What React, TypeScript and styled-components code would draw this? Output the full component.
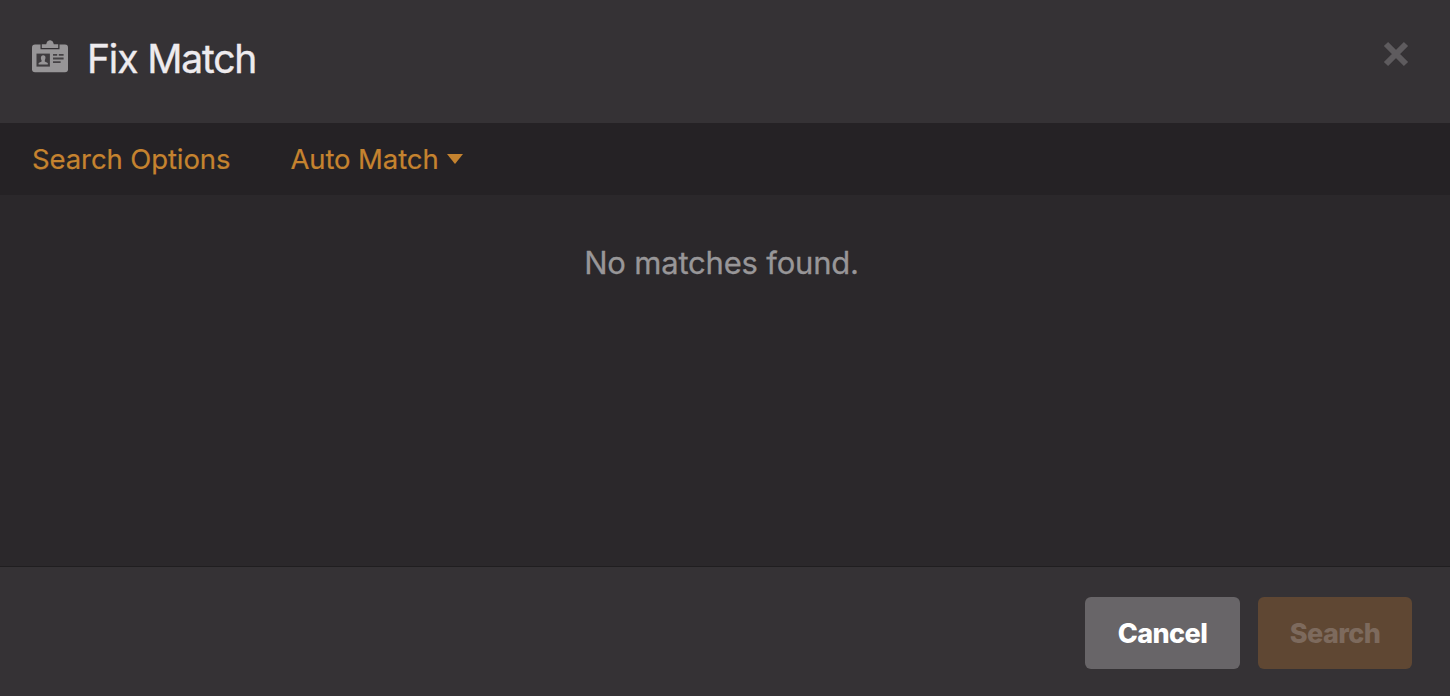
import React, { FC } from "react";
import styled, { createGlobalStyle } from "styled-components";

const GlobalStyle = createGlobalStyle`
  body {
    margin: 0;
    background-color: #2b282b;
    font-family: Inter, "Liberation Sans", sans-serif;
  }
`;
const Modal = styled.div`
  display: flex;
  flex-direction: column;
  height: 100vh;
  overflow: hidden;
  background-color: #2b282b;
`;
const Header = styled.header`
  box-sizing: border-box;
  display: flex;
  flex: none;
  height: 123px;
  padding: 35px 41px 0 32px;
  background-color: #353235;
`;
const TitleIcon = styled.svg`
  flex: none;
  width: 36px;
  height: 34px;
  margin-top: 4px;
`;
const Title = styled.h1`
  flex: 1;
  margin: 0 0 0 19px;
  font-size: 39px;
  font-weight: 400;
  line-height: 48px;
  letter-spacing: -1.15px;
  -webkit-text-stroke: 0.4px currentColor;
  color: #eeebee;
`;
const CloseButton = styled.button`
  width: 26px;
  height: 26px;
  margin-top: 6px;
  padding: 0;
  border: 0;
  background: none;
  color: #5e5b5e;

  svg {
    display: block;
  }
`;
const Toolbar = styled.nav`
  display: flex;
  flex: none;
  align-items: center;
  gap: 60px;
  height: 72px;
  padding: 0 32px;
  background-color: #252225;
`;
const ToolbarLink = styled.button`
  display: flex;
  align-items: center;
  gap: 8px;
  padding: 0;
  border: 0;
  background: none;
  font-family: inherit;
  font-size: 27.5px;
  font-weight: 400;
  line-height: 36px;
  letter-spacing: -0.1px;
  -webkit-text-stroke: 0.2px currentColor;
  white-space: nowrap;
  color: #c5832f;
`;
const Caret = styled.span`
  border-top: 10px solid currentColor;
  border-left: 8px solid transparent;
  border-right: 8px solid transparent;
`;
const Content = styled.main`
  flex: 1;
  padding: 48px 7px 0 0;
`;
const EmptyMessage = styled.p`
  margin: 0;
  text-align: center;
  font-size: 31px;
  font-weight: 400;
  line-height: 40px;
  letter-spacing: -0.2px;
  -webkit-text-stroke: 0.3px currentColor;
  color: #989698;
`;
const Footer = styled.footer`
  box-sizing: border-box;
  display: flex;
  flex: none;
  justify-content: flex-end;
  gap: 18px;
  height: 130px;
  padding: 30px 38px 0;
  border-top: 1px solid #201e20;
  background-color: #353235;
`;
const FooterButton = styled.button<{ $primary?: boolean }>`
  width: ${(props) => (props.$primary ? 154 : 155)}px;
  height: 72px;
  padding: 0;
  border: 0;
  border-radius: 6px;
  background-color: ${(props) => (props.$primary ? "#5f4733" : "#686568")};
  font-family: inherit;
  font-size: 27px;
  font-weight: 800;
  letter-spacing: -0.6px;
  color: ${(props) => (props.$primary ? "#7d6a5d" : "#ffffff")};
`;

const ClipboardIcon: FC = () => (
  <TitleIcon viewBox="0 0 36 34">
    <rect y="5.5" width="36" height="27.8" rx="3" fill="#979597" />
    <path
      d="M9.8 5.2H14.2C14.8 2.6 16 1.4 18 1.4S21.2 2.6 21.8 5.2H26.2V9H9.8Z"
      fill="#979597"
      stroke="#353235"
      strokeWidth="2.6"
      paintOrder="stroke"
    />
    <circle cx="18" cy="4.4" r="3" fill="#979597" />
    <rect x="4.5" y="14.6" width="13.4" height="13" fill="#3f3c3f" />
    <ellipse cx="11.2" cy="18.9" rx="2.3" ry="2.6" fill="#979597" />
    <path d="M6.6 25.6V24L9.6 22.5V20.5H12.8V22.5L15.8 24V25.6Z" fill="#979597" />
    <path
      d="M21 15.8H25.2M26.8 15.8H31.6M21 19.5H31.6M21 23.2H28.6"
      stroke="#454245"
      strokeWidth="1.8"
    />
  </TitleIcon>
);

const App: FC = () => {
  return (
    <>
      <GlobalStyle />
      <Modal>
        <Header>
          <ClipboardIcon />
          <Title>Fix Match</Title>
          <CloseButton aria-label="Close">
            <svg width="26" height="26" viewBox="0 0 26 26">
              <path d="M3 3L23 23M23 3L3 23" stroke="currentColor" strokeWidth="6" />
            </svg>
          </CloseButton>
        </Header>
        <Toolbar>
          <ToolbarLink>Search Options</ToolbarLink>
          <ToolbarLink>
            Auto Match
            <Caret />
          </ToolbarLink>
        </Toolbar>
        <Content>
          <EmptyMessage>No matches found.</EmptyMessage>
        </Content>
        <Footer>
          <FooterButton>Cancel</FooterButton>
          <FooterButton $primary disabled>
            Search
          </FooterButton>
        </Footer>
      </Modal>
    </>
  );
};
export default App;
